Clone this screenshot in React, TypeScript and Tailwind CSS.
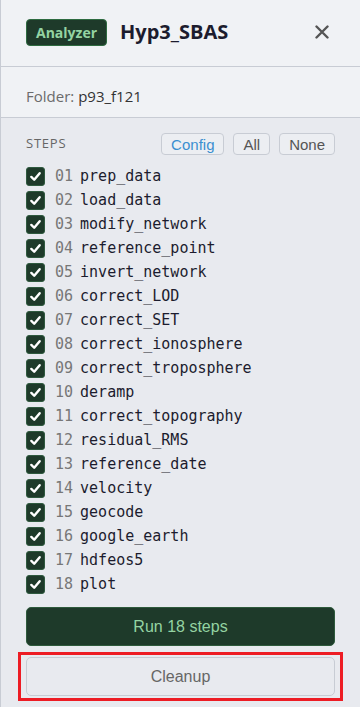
const steps = [
  "prep_data",
  "load_data",
  "modify_network",
  "reference_point",
  "invert_network",
  "correct_LOD",
  "correct_SET",
  "correct_ionosphere",
  "correct_troposphere",
  "deramp",
  "correct_topography",
  "residual_RMS",
  "reference_date",
  "velocity",
  "geocode",
  "google_earth",
  "hdfeos5",
  "plot",
];

function Check() {
  return (
    <div className="w-[19px] h-[19px] shrink-0 rounded-[3px] bg-[#1e3a2a] border border-[#2f5a3f] flex items-center justify-center">
      <svg width="13" height="13" viewBox="0 0 14 14">
        <path
          d="M2.5 7.5 L5.6 10.5 L11.5 3.5"
          fill="none"
          stroke="#ffffff"
          strokeWidth="2.6"
          strokeLinecap="round"
          strokeLinejoin="round"
        />
      </svg>
    </div>
  );
}

export default function App() {
  return (
    <div className="w-[360px] h-[707px] overflow-hidden border-l border-[#c8ccd4] bg-[#e8eaef] font-['Open_Sans',sans-serif]">
      {/* Header */}
      <div className="h-[67px] bg-[#f0f2f5] border-b border-[#c8ccd4] flex items-center pl-[25px] pr-[31px]">
        <span className="h-[27px] mt-[-2px] px-[9px] flex items-center rounded-[4px] bg-[#1e3a2a] border border-[#2e6b40] text-[#94d3a2] text-[14px] font-bold">
          Analyzer
        </span>
        <h1 className="ml-[13px] mt-[-3px] text-[20px] font-bold text-[#1c1c2e]">Hyp3_SBAS</h1>
        <svg className="ml-auto mt-[-3px]" width="14" height="14" viewBox="0 0 14 14">
          <path d="M1.5 1.5 L12.5 12.5 M12.5 1.5 L1.5 12.5" stroke="#555555" strokeWidth="2.4" strokeLinecap="round" />
        </svg>
      </div>

      {/* Folder */}
      <div className="h-[51px] bg-[#f0f2f5] border-b border-[#c8ccd4] pl-[25px] pt-[19px] text-[15px] leading-[20px]">
        <span className="text-[#6b6b6b]">Folder: </span>
        <span className="text-[#333333]">p93_f121</span>
      </div>

      {/* Steps */}
      <div className="px-[25px] pt-[15px]">
        <div className="flex items-center h-[22px]">
          <span className="text-[13px] tracking-[0.06em] text-[#666666]">STEPS</span>
          <div className="ml-auto flex gap-[9px] font-['Liberation_Sans',sans-serif] text-[15px]">
            <button className="h-[22px] px-[9px] rounded-[4px] border border-[#c8ccd4] bg-[#eceef2] text-[#3a8fd0] leading-none">
              Config
            </button>
            <button className="h-[22px] px-[9px] rounded-[4px] border border-[#c8ccd4] bg-[#eceef2] text-[#555555] leading-none">
              All
            </button>
            <button className="h-[22px] px-[9px] rounded-[4px] border border-[#c8ccd4] bg-[#eceef2] text-[#555555] leading-none">
              None
            </button>
          </div>
        </div>

        <div className="mt-[9px] flex flex-col">
          {steps.map((name, i) => (
            <div key={name} className="h-[24px] flex items-center">
              <Check />
              <span className="ml-[10px] font-['DejaVu_Sans_Mono',monospace] text-[15px] text-[#777777]">
                {String(i + 1).padStart(2, "0")}
              </span>
              <span className="ml-[7px] font-['DejaVu_Sans_Mono',monospace] text-[15px] text-[#1c1c2e]">
                {name}
              </span>
            </div>
          ))}
        </div>

        <button className="mt-[11px] w-full h-[39px] rounded-[5px] bg-[#1e3a2a] border border-[#2e5a3c] text-[#94d3a2] text-[16px] font-['Liberation_Sans',sans-serif]">
          Run 18 steps
        </button>

        <div className="mt-[6px] -mx-[8px] border-[3px] border-[#ed1c24] px-[5px] py-[2px]">
          <button className="w-full h-[39px] rounded-[5px] bg-[#e8eaef] border border-[#c8ccd4] text-[#666666] text-[16px] font-['Liberation_Sans',sans-serif]">
            Cleanup
          </button>
        </div>
      </div>
    </div>
  );
}
